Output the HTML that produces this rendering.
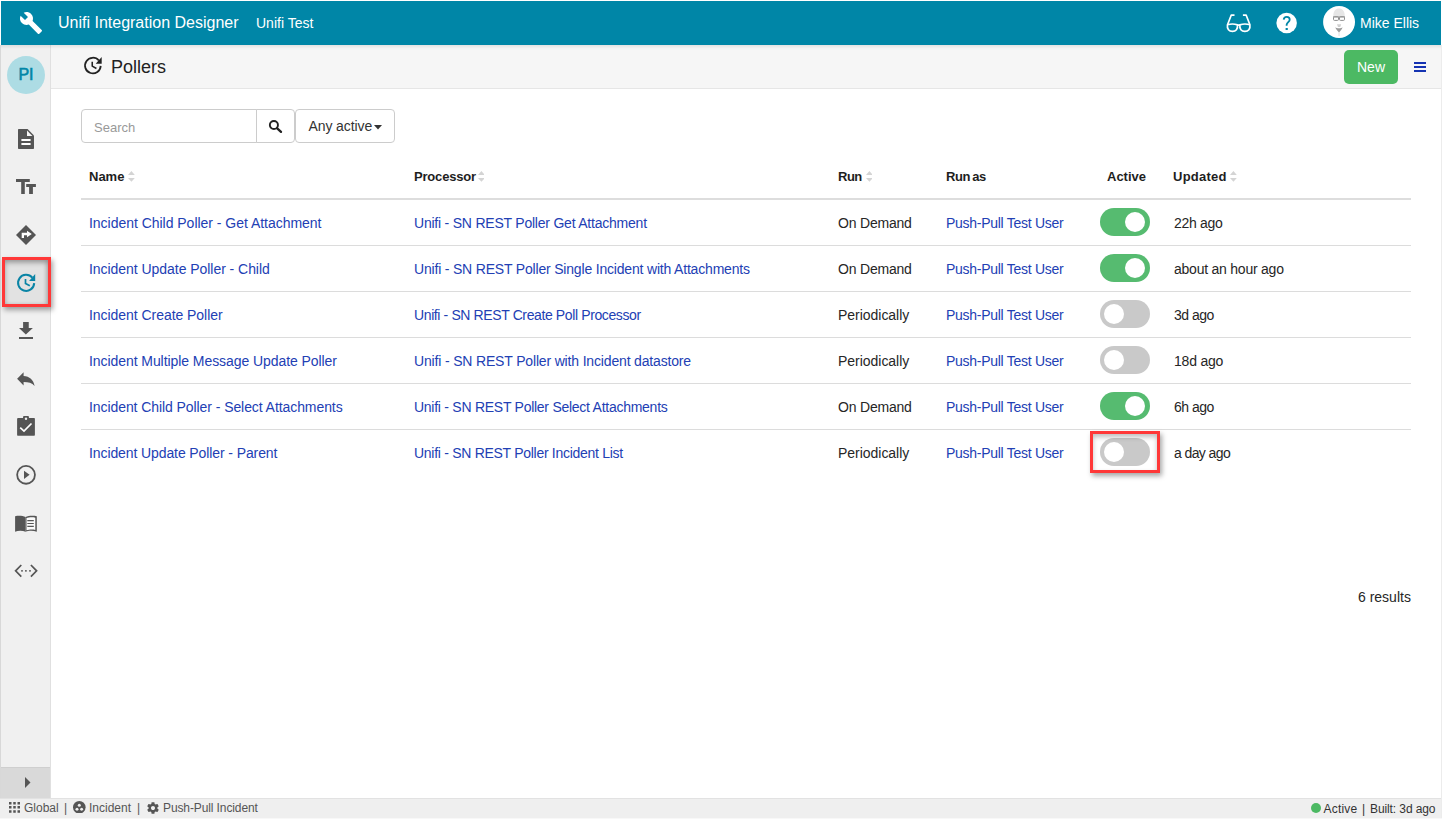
<!DOCTYPE html>
<html><head><meta charset="utf-8">
<style>
*{box-sizing:border-box;margin:0;padding:0}
html,body{width:1442px;height:819px;overflow:hidden;background:#fff;font-family:"Liberation Sans",sans-serif;color:#333}
.a{position:absolute}
.t{position:absolute;white-space:nowrap;line-height:1}
#hdr{left:1px;top:1px;width:1440px;height:44px;background:#0086a7}
#side{left:0;top:45px;width:51px;height:753px;background:#f0f0f0;border-left:1px solid #d8d8d8;border-right:1px solid #e0e0e0}
#sub{left:51px;top:45px;width:1390px;height:44px;background:#f6f6f6;border-bottom:1px solid #e6e6e6}
#rb{left:1441px;top:45px;width:1px;height:774px;background:#ececec}
#foot{left:0;top:798px;width:1441px;height:20px;background:#efefef;border-top:1px solid #e2e2e2}
.hs{left:1px;top:45px;width:1440px;height:4px;background:linear-gradient(rgba(0,0,0,.08),rgba(0,0,0,0))}
.ico{position:absolute;fill:#555}
.th{font-weight:bold;font-size:13px;color:#1e1e1e}
.td{font-size:14px;color:#262626}
.td.lnk{color:#2240b4}
.rowline{position:absolute;left:81px;width:1330px;height:1px;background:#dcdcdc}
.tog{position:absolute;left:1100px;width:50px;height:28px;border-radius:14px}
.tog.on{background:#56bb70}
.tog.off{background:#c9c9c9}
.knob{position:absolute;top:4px;width:20px;height:20px;border-radius:50%;background:#fff}
.on .knob{left:25px}
.off .knob{left:4px}
.sort{position:absolute;width:6.85px;height:10.7px}
</style></head><body>

<!-- header -->
<div id="hdr" class="a"></div>
<svg class="a" style="left:18.6px;top:10.6px" width="24" height="24" viewBox="0 0 24 24"><path fill="#fff" d="M22.7 19l-9.1-9.1c.9-2.3.4-5-1.5-6.9-2-2-5-2.4-7.4-1.3L9 6 6 9 1.6 4.7C.4 7.1.9 10.1 2.9 12.1c1.9 1.9 4.6 2.4 6.9 1.5l9.1 9.1c.4.4 1 .4 1.4 0l2.3-2.3c.5-.4.5-1.1.1-1.4z"/></svg>
<div class="t" style="left:58px;top:15px;font-size:16px;color:#fff">Unifi Integration Designer</div>
<div class="t" style="left:256px;top:16px;font-size:14px;color:#fff">Unifi Test</div>

<svg class="a" style="left:1220px;top:8px" width="38" height="30" viewBox="0 0 38 30"><g fill="none" stroke="#fff" stroke-width="1.7" stroke-linejoin="round"><path d="M7.45 16.8 C10 16 15 16 17.45 16.9 C18.1 21.3 15.8 23.3 12.45 23.3 C9.1 23.3 6.8 21.3 7.45 16.8Z"/><path d="M29.9 16.8 C27.35 16 22.35 16 19.9 16.9 C19.25 21.3 21.55 23.3 24.9 23.3 C28.25 23.3 30.55 21.3 29.9 16.8Z"/><path d="M17.4 17.1 H19.9"/><path d="M7.6 16.5 L11.2 7.2 H14.5"/><path d="M29.8 16.5 L26.2 7.2 H22.9"/></g></svg>
<svg class="a" style="left:1276px;top:12px" width="22" height="22" viewBox="0 0 22 22"><circle cx="10.65" cy="11.05" r="10.25" fill="#fff"/><path d="M7.7 7.6 C7.9 5.5 9.3 4.9 10.7 4.9 C12.5 4.9 13.7 6.2 13.7 7.7 C13.7 9.8 11.1 10.4 10.7 12.5 L10.6 13.8" fill="none" stroke="#0086a7" stroke-width="1.8"/><rect x="9.6" y="16" width="2.2" height="2" fill="#0086a7"/></svg>
<svg class="a" style="left:1323px;top:6px" width="32" height="32" viewBox="0 0 32 32"><circle cx="16.05" cy="15.95" r="15.95" fill="#fff"/><path d="M10.3 10 C10.3 5 12.5 2.4 16 2.4 C19.5 2.4 21.7 5 21.7 10Z" fill="#e6e6e6"/><path d="M10 10.3 H22 V11.4 H10Z" fill="#9a9a9a"/><g fill="none" stroke="#8e8e8e" stroke-width="1"><rect x="10.5" y="10.8" width="5" height="3.6" rx="1"/><rect x="16.5" y="10.8" width="5" height="3.6" rx="1"/></g><path d="M14 18.2 H18.2 L17.2 21 H15Z" fill="#d0d0d0"/><path d="M12.2 21.2 C13 23 14.5 25 16 26.4 C17.5 25 19 23 19.6 21.2 C18 22.6 14 22.6 12.2 21.2Z" fill="#9c9c9c"/><rect x="15.4" y="26" width="1.3" height="4" fill="#e6e6e6"/></svg>
<div class="t" style="left:1360px;top:16px;font-size:14px;color:#fff">Mike Ellis</div>

<!-- sidebar -->
<div id="side" class="a"></div>
<div id="sub" class="a"></div>
<div class="a hs"></div>
<div id="rb" class="a"></div>

<div class="a" style="left:7px;top:56px;width:38px;height:38px;border-radius:50%;background:#addce4"></div>
<div class="t" style="left:7px;top:67px;width:38px;text-align:center;font-size:16px;color:#0086a7;-webkit-text-stroke:0.6px #0086a7">PI</div>

<!-- sidebar icons -->
<svg class="ico" style="left:18px;top:129px" width="16" height="20" viewBox="0 0 16 20"><path d="M1 0 H9.6 L16 6.4 V19 C16 19.6 15.6 20 15 20 H1 C0.4 20 0 19.6 0 19 V1 C0 0.4 0.4 0 1 0Z"/><path d="M9 1.6 V7 H14.4Z" fill="#f6f6f6"/><path d="M3.4 10 H12.6 V12 H3.4Z M3.4 14 H12.6 V16 H3.4Z" fill="#fff"/></svg>
<svg class="ico" style="left:16px;top:179px" width="21" height="16" viewBox="0 0 21 16"><path d="M0 0 H13.8 V3 H8.8 V15 H5.2 V3 H0Z M10.2 5.1 H19.9 V7.9 H16.9 V15 H13.1 V7.9 H10.2Z"/></svg>
<svg class="ico" style="left:16px;top:225px" width="20" height="20" viewBox="0 0 20 20"><path d="M10 0 L20 10 L10 20 L0 10Z"/><path d="M5.7 12.9 V7.8 H11 V5.7 L15.8 9 L11 12.3 V10.2 H8 V12.9Z" fill="#fff"/></svg>

<svg class="ico" style="left:18px;top:321px" width="16" height="18" viewBox="0 0 16 18"><path d="M5.1 1 H10.75 V7 H14.9 L7.85 13.6 L1 7 H5.1Z M1 16 H15 V18 H1Z"/></svg>
<svg class="ico" style="left:17px;top:372px" width="19" height="15" viewBox="0 0 19 15"><path d="M0.1 6.8 L6.6 0.2 V4.1 C12.5 4.3 16.5 8 17.6 13.9 C15 10.8 11.5 9.9 6.6 9.9 V13.5 Z"/></svg>
<svg class="ico" style="left:17px;top:416px" width="18" height="20" viewBox="0 0 18 20"><path d="M1 2 H6 A3 3 0 0 1 12 2 H17 C17.5 2 17.9 2.4 17.9 3 V18.8 C17.9 19.4 17.5 19.8 17 19.8 H1 C0.5 19.8 0.1 19.4 0.1 18.8 V3 C0.1 2.4 0.5 2 1 2Z"/><circle cx="9" cy="2.8" r="1.2" fill="#f0f0f0"/><path d="M3.2 11.7 L7 15.1 L14.5 7.5" fill="none" stroke="#fff" stroke-width="1.7"/></svg>
<svg class="ico" style="left:15px;top:464px" width="22" height="22" viewBox="0 0 22 22"><circle cx="11.05" cy="10.85" r="8.9" fill="none" stroke="#555" stroke-width="1.8"/><path d="M9 6.7 L14.6 10.85 L9 15Z"/></svg>
<svg class="ico" style="left:15px;top:515px" width="22" height="17" viewBox="0 0 22 17"><path d="M0.1 1.2 C3 0.5 7.5 0.5 10.6 2 V16.7 C7.5 15.5 3 15.5 0.1 16.7Z"/><path d="M10.6 2 C13.5 0.5 18.5 0.5 21.8 1.2 V16.7 C18.5 15.5 13.5 15.5 10.6 16.7 Z"/><path d="M11.5 3.1 C14 2.1 18 2.1 20.3 2.7 V14.9 C18 14.4 14 14.4 11.5 15.3Z" fill="#fbfbfb"/><path d="M12.3 5.6 H18.8 M12.3 8.5 H18.8 M12.3 11.4 H18.8" stroke="#555" stroke-width="1.2"/></svg>
<svg class="ico" style="left:14px;top:564px" width="24" height="14" viewBox="0 0 24 14"><path d="M7.3 1 L1.6 6.85 L7.3 12.7 M16.9 1 L22.6 6.85 L16.9 12.7" fill="none" stroke="#555" stroke-width="1.7"/><rect x="7.2" y="6.05" width="1.6" height="1.6"/><rect x="11.1" y="6.05" width="1.6" height="1.6"/><rect x="15.2" y="6.05" width="1.6" height="1.6"/></svg>

<!-- collapse button -->
<div class="a" style="left:1px;top:767px;width:49px;height:31px;background:#d9d9d9;border-top:1px solid #cfcfcf"></div>
<svg class="a" style="left:25px;top:777px" width="6" height="11" viewBox="0 0 6 11"><path d="M0 0 L5.5 5.5 L0 11Z" fill="#555"/></svg>

<!-- subheader -->
<svg class="a" style="left:83.2px;top:56.2px" width="20.43" height="19.46" viewBox="0 0 21 20"><g fill="none" stroke="#222" stroke-width="1.8"><path d="M18.19 10.13 A8.05 8.05 0 1 1 16.32 4.68"/><path d="M9.5 5.9 V10.4 L13.8 12.8" stroke-width="1.6"/></g><path d="M19.2 1.1 V8 H13.1Z" fill="#222"/></svg>
<div class="t" style="left:111px;top:58px;font-size:18px;color:#222">Pollers</div>
<div class="a" style="left:1344px;top:50px;width:54px;height:34px;border-radius:5px;background:#4cb963"></div>
<div class="t" style="left:1344px;top:60px;width:54px;text-align:center;font-size:14px;color:#fff">New</div>
<div class="a" style="left:1414px;top:62px;width:12px;height:2px;background:#1533b2"></div>
<div class="a" style="left:1414px;top:66px;width:12px;height:2px;background:#1533b2"></div>
<div class="a" style="left:1414px;top:70px;width:12px;height:2px;background:#1533b2"></div>

<!-- search -->
<div class="a" style="left:81px;top:109px;width:176px;height:34px;border:1px solid #ccc;border-radius:4px 0 0 4px"></div>
<div class="t" style="left:94px;top:121px;font-size:13px;color:#999">Search</div>
<div class="a" style="left:256px;top:109px;width:39px;height:34px;border:1px solid #ccc;border-radius:0 4px 4px 0"></div>
<svg class="a" style="left:268px;top:119px" width="16" height="16" viewBox="0 0 16 16"><circle cx="5.9" cy="6" r="4.05" fill="none" stroke="#222" stroke-width="1.9"/><path d="M9.2 9.3 L13 12.9" stroke="#222" stroke-width="2.3" stroke-linecap="round"/></svg>
<div class="a" style="left:295px;top:109px;width:100px;height:34px;border:1px solid #ccc;border-radius:4px"></div>
<div class="t" style="left:308.5px;top:119px;font-size:14px;color:#333;letter-spacing:-0.1px">Any active</div>
<svg class="a" style="left:374px;top:125px" width="8" height="5" viewBox="0 0 8 5"><path d="M0 0 H8 L4 4.5Z" fill="#333"/></svg>

<!-- table header -->
<div class="t th" style="left:89px;top:170px">Name</div>
<div class="t th" style="left:414px;top:170px;letter-spacing:-0.19px">Processor</div>
<div class="t th" style="left:838px;top:170px;letter-spacing:-0.5px">Run</div>
<div class="t th" style="left:946px;top:170px;letter-spacing:-0.4px;word-spacing:-1px">Run as</div>
<div class="t th" style="left:1107px;top:170px">Active</div>
<div class="t th" style="left:1173px;top:170px;letter-spacing:0.25px">Updated</div>
<svg class="sort" style="left:127.8px;top:170.9px" viewBox="0 0 6.85 10.7"><path d="M3.43 0 L6.85 3.9 H0Z M0 7.1 H6.85 L3.43 10.7Z" fill="#d4d4d4"/></svg>
<svg class="sort" style="left:477.5px;top:170.9px" viewBox="0 0 6.85 10.7"><path d="M3.43 0 L6.85 3.9 H0Z M0 7.1 H6.85 L3.43 10.7Z" fill="#d4d4d4"/></svg>
<svg class="sort" style="left:865.6px;top:170.9px" viewBox="0 0 6.85 10.7"><path d="M3.43 0 L6.85 3.9 H0Z M0 7.1 H6.85 L3.43 10.7Z" fill="#d4d4d4"/></svg>
<svg class="sort" style="left:1229.7px;top:170.9px" viewBox="0 0 6.85 10.7"><path d="M3.43 0 L6.85 3.9 H0Z M0 7.1 H6.85 L3.43 10.7Z" fill="#d4d4d4"/></svg>
<div class="a" style="left:81px;top:198px;width:1330px;height:2px;background:#ddd"></div>

<!-- rows -->
<div class="t td lnk" style="left:89px;top:216px;letter-spacing:-0.027px">Incident Child Poller - Get Attachment</div>
<div class="t td lnk" style="left:414px;top:216px;letter-spacing:-0.219px">Unifi - SN REST Poller Get Attachment</div>
<div class="t td" style="left:838px;top:216px;letter-spacing:-0.200px">On Demand</div>
<div class="t td lnk" style="left:946px;top:216px;letter-spacing:-0.278px">Push-Pull Test User</div>
<div class="tog on" style="top:208px"><div class="knob"></div></div>
<div class="t td" style="left:1174px;top:216px;letter-spacing:-0.300px">22h ago</div>
<div class="rowline" style="top:245px"></div>
<div class="t td lnk" style="left:89px;top:262px;letter-spacing:-0.045px">Incident Update Poller - Child</div>
<div class="t td lnk" style="left:414px;top:262px;letter-spacing:-0.185px">Unifi - SN REST Poller Single Incident with Attachments</div>
<div class="t td" style="left:838px;top:262px;letter-spacing:-0.200px">On Demand</div>
<div class="t td lnk" style="left:946px;top:262px;letter-spacing:-0.278px">Push-Pull Test User</div>
<div class="tog on" style="top:254px"><div class="knob"></div></div>
<div class="t td" style="left:1174px;top:262px;letter-spacing:-0.231px">about an hour ago</div>
<div class="rowline" style="top:291px"></div>
<div class="t td lnk" style="left:89px;top:308px;letter-spacing:-0.048px">Incident Create Poller</div>
<div class="t td lnk" style="left:414px;top:308px;letter-spacing:-0.383px">Unifi - SN REST Create Poll Processor</div>
<div class="t td" style="left:838px;top:308px;letter-spacing:-0.027px">Periodically</div>
<div class="t td lnk" style="left:946px;top:308px;letter-spacing:-0.278px">Push-Pull Test User</div>
<div class="tog off" style="top:300px"><div class="knob"></div></div>
<div class="t td" style="left:1174px;top:308px;letter-spacing:-0.520px">3d ago</div>
<div class="rowline" style="top:337px"></div>
<div class="t td lnk" style="left:89px;top:354px;letter-spacing:-0.068px">Incident Multiple Message Update Poller</div>
<div class="t td lnk" style="left:414px;top:354px;letter-spacing:-0.164px">Unifi - SN REST Poller with Incident datastore</div>
<div class="t td" style="left:838px;top:354px;letter-spacing:-0.027px">Periodically</div>
<div class="t td lnk" style="left:946px;top:354px;letter-spacing:-0.278px">Push-Pull Test User</div>
<div class="tog off" style="top:346px"><div class="knob"></div></div>
<div class="t td" style="left:1174px;top:354px;letter-spacing:-0.217px">18d ago</div>
<div class="rowline" style="top:383px"></div>
<div class="t td lnk" style="left:89px;top:400px;letter-spacing:-0.076px">Incident Child Poller - Select Attachments</div>
<div class="t td lnk" style="left:414px;top:400px;letter-spacing:-0.263px">Unifi - SN REST Poller Select Attachments</div>
<div class="t td" style="left:838px;top:400px;letter-spacing:-0.200px">On Demand</div>
<div class="t td lnk" style="left:946px;top:400px;letter-spacing:-0.278px">Push-Pull Test User</div>
<div class="tog on" style="top:392px"><div class="knob"></div></div>
<div class="t td" style="left:1174px;top:400px;letter-spacing:-0.520px">6h ago</div>
<div class="rowline" style="top:429px"></div>
<div class="t td lnk" style="left:89px;top:446px;letter-spacing:-0.100px">Incident Update Poller - Parent</div>
<div class="t td lnk" style="left:414px;top:446px;letter-spacing:-0.286px">Unifi - SN REST Poller Incident List</div>
<div class="t td" style="left:838px;top:446px;letter-spacing:-0.027px">Periodically</div>
<div class="t td lnk" style="left:946px;top:446px;letter-spacing:-0.278px">Push-Pull Test User</div>
<div class="tog off" style="top:438px"><div class="knob"></div></div>
<div class="t td" style="left:1174px;top:446px;letter-spacing:-0.600px">a day ago</div>

<div class="t td" style="left:1358px;top:590px">6 results</div>

<!-- footer -->
<div id="foot" class="a"></div>
<div class="a" style="left:0;top:818px;width:1442px;height:1px;background:#f8f8f8"></div>
<svg class="ico" style="left:9px;top:802px" width="11" height="11" viewBox="0 0 11 11"><path d="M0 0h2.5v2.5H0zM4.25 0h2.5v2.5h-2.5zM8.5 0h2.5v2.5H8.5zM0 4.1h2.5v2.5H0zM4.25 4.1h2.5v2.5h-2.5zM8.5 4.1h2.5v2.5H8.5zM0 8.2h2.5v2.5H0zM4.25 8.2h2.5v2.5h-2.5zM8.5 8.2h2.5v2.5H8.5z"/></svg>
<div class="t" style="left:24px;top:802px;font-size:12px;color:#555">Global</div>
<div class="t" style="left:64px;top:802px;font-size:12px;color:#555">|</div>
<svg class="ico" style="left:72.95px;top:800.9px" width="12.6" height="12.6" viewBox="0 0 12.6 12.6"><circle cx="6.3" cy="6.3" r="6.3"/><circle cx="6.3" cy="4.2" r="1.5" fill="#efefef"/><circle cx="4.0" cy="8.2" r="1.5" fill="#efefef"/><circle cx="8.6" cy="8.2" r="1.5" fill="#efefef"/></svg>
<div class="t" style="left:89px;top:802px;font-size:12px;color:#555">Incident</div>
<div class="t" style="left:137px;top:802px;font-size:12px;color:#555">|</div>
<svg class="ico" style="left:145.5px;top:800.6px" width="14" height="14" viewBox="0 0 24 24"><path d="M19.4 13c.04-.3.06-.6.06-1s-.02-.7-.06-1l2.1-1.65c.2-.15.25-.42.12-.64l-2-3.46c-.12-.22-.39-.3-.61-.22l-2.49 1c-.52-.4-1.080-.73-1.690-.98l-.38-2.65C14.46 2.18 14.25 2 14 2h-4c-.25 0-.46.18-.49.42l-.38 2.65c-.61.25-1.17.59-1.69.98l-2.49-1c-.23-.09-.49 0-.61.22l-2 3.46c-.13.22-.07.49.12.64L4.57 11c-.04.32-.07.65-.07 1s.02.68.06 1l-2.11 1.65c-.19.15-.24.42-.12.64l2 3.46c.12.22.39.3.61.22l2.49-1c.52.4 1.08.73 1.69.98l.38 2.65c.03.24.24.42.49.42h4c.25 0 .46-.18.49-.42l.38-2.650c.61-.25 1.17-.59 1.69-.98l2.49 1c.23.09.49 0 .61-.22l2-3.46c.12-.22.07-.49-.12-.64L19.4 13zM12 15.5c-1.93 0-3.5-1.57-3.5-3.5s1.57-3.5 3.5-3.5 3.5 1.57 3.5 3.5-1.57 3.5-3.5 3.5z"/></svg>
<div class="t" style="left:163px;top:802px;font-size:12px;color:#555;letter-spacing:-0.11px">Push-Pull Incident</div>
<div class="a" style="left:1311px;top:803px;width:10px;height:10px;border-radius:50%;background:#4cb963"></div>
<div class="t" style="left:1323.5px;top:803px;font-size:12px;color:#333;letter-spacing:0.2px">Active</div>
<div class="t" style="left:1362px;top:803px;font-size:12px;color:#333">|</div>
<div class="t" style="left:1370px;top:803px;font-size:12px;color:#333;letter-spacing:-0.1px">Built: 3d ago</div>
<!-- annotations -->
<div class="a" style="left:2px;top:257px;width:49px;height:50px;background:#e2e2e2"></div>
<svg class="ico" style="left:16px;top:273px" width="21" height="20" viewBox="0 0 21 20"><g fill="none" stroke="#0a84a5" stroke-width="2"><path d="M18.19 10.13 A8.05 8.05 0 1 1 16.32 4.68"/><path d="M9.5 5.9 V10.4 L13.8 12.8" stroke-width="1.7"/></g><path d="M19.2 1.1 V8 H13.1Z" fill="#0a84a5"/></svg>
<div class="a" style="left:2px;top:257px;width:49px;height:50px;border:3px solid #ff3838;box-shadow:2px 3px 5px rgba(0,0,0,.35), inset 0 3px 5px rgba(0,0,0,.28), inset -2px 0 4px rgba(0,0,0,.12)"></div>
<div class="a" style="left:1090px;top:431px;width:70px;height:42px;border:3px solid #ff3838;box-shadow:2px 3px 5px rgba(0,0,0,.35), inset 0 3px 5px rgba(0,0,0,.25)"></div>
</body></html>
